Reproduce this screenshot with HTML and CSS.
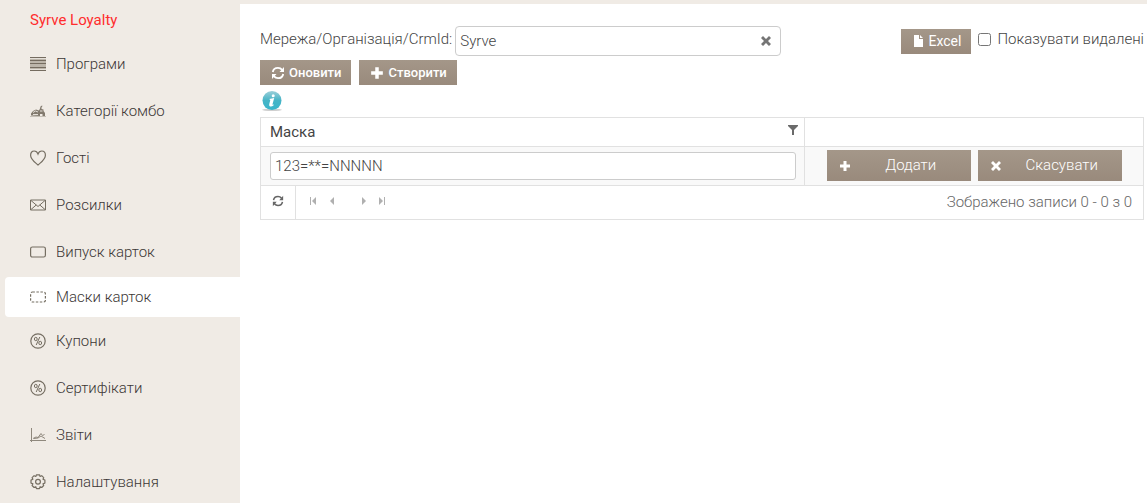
FILE: index.html
```html
<!DOCTYPE html>
<html lang="uk">
<head>
<meta charset="utf-8">
<title>Syrve Loyalty</title>
<link rel="stylesheet" href="styles.css">
</head>
<body>
<svg class="sprite" aria-hidden="true">
  <symbol id="refresh" viewBox="0 0 14 14"><path d="M1.800 6C2.200 3.300 4.200 1.800 7 1.800c1.700 0 3 .6 4.200 2M12.200 8C11.800 10.700 9.800 12.200 7 12.200c-1.700 0-3-.6-4.200-2" fill="none" stroke="currentColor" stroke-width="1.800"/><path d="M13 1v5H8.500zM1 13V8h4.500z" fill="currentColor"/></symbol>
  <symbol id="plus" viewBox="0 0 12 12"><path d="M4.500 1h3v3.500H11v3H7.500V11h-3V7.500H1v-3h3.500z" fill="currentColor"/></symbol>
  <symbol id="cross" viewBox="0 0 12 12"><path d="M3 1 6 4l3-3 2 2-3 3 3 3-2 2-3-3-3 3-2-2 3-3-3-3z" fill="currentColor"/></symbol>
  <symbol id="percent" viewBox="0 0 16 16"><g fill="none" stroke="currentColor"><circle cx="8" cy="8" r="7.200" stroke-width="1.200"/><ellipse cx="5.800" cy="6" rx="1.400" ry="1.700"/><ellipse cx="10.200" cy="10" rx="1.400" ry="1.700"/><path d="m9.800 4-3.600 8"/></g></symbol>
</svg>
<div class="app">
  <aside class="sidebar">
    <h1 class="brand">Syrve Loyalty</h1>
    <nav class="menu">
      <a class="item" href="#"><svg class="icon" viewBox="0 0 16 16"><path fill="#bcb5aa" d="M0 1h16v14H0z"/><path d="M0 1.500h16M0 4.500h16M0 7.500h16M0 11.500h16M0 14.500h16" stroke="#756c60"/><path d="M0 2.500h16M0 13.500h16" stroke="#e4dfd8"/></svg>Програми</a>
      <a class="item" href="#"><svg class="icon" viewBox="0 0 16 16"><path d="M1 12.500v-2L3 8l3-1.500 3 1 1-2 .5-2L12 2.500l.5.500-1 1.500v1.500l2 .5v1.500l1.500 2v3h-2.500v-2H10v2z" fill="#827a6e"/><path d="m3 9.500 2.500-1.500L8 9M10 8h2.500M3 11.500h5" stroke="#e4dfd8" fill="none"/><path d="M0 13.500h16" stroke="#c4beb5"/></svg>Категорії комбо</a>
      <a class="item" href="#"><svg class="icon" viewBox="0 0 16 16"><path d="M8 15C5 12.200.6 9.500.6 5.200.6 2.500 2.200 1 4.200 1 6 1 7.300 2 8 4c.7-2 2-3 3.800-3 2 0 3.600 1.500 3.600 4.200C15.400 9.500 11 12.200 8 15z" fill="none" stroke="currentColor" stroke-width="1.200"/></svg>Гості</a>
      <a class="item" href="#"><svg class="icon" viewBox="0 0 16 16"><path d="M.5 3h15v10H.5zM1 3.500l7 6 7-6M1 12.500l5.200-4.500M15 12.500 9.800 8" fill="none" stroke="currentColor"/></svg>Розсилки</a>
      <a class="item" href="#"><svg class="icon" viewBox="0 0 16 16"><rect x=".6" y="3" width="14.800" height="10" rx="1.800" fill="none" stroke="currentColor" stroke-width="1.200"/></svg>Випуск карток</a>
      <a class="item active" href="#" aria-current="page"><svg class="icon" viewBox="0 0 16 16"><rect x=".6" y="3" width="14.800" height="10" rx="1.800" fill="none" stroke="currentColor" stroke-width="1.200" stroke-dasharray="2.500 1.500"/></svg>Маски карток</a>
      <a class="item" href="#"><svg class="icon"><use href="#percent"/></svg>Купони</a>
      <a class="item" href="#"><svg class="icon"><use href="#percent"/></svg>Сертифікати</a>
      <a class="item" href="#"><svg class="icon" viewBox="0 0 16 16"><path d="M1.500 1v14M0 13.500h16" stroke="#8f887d" fill="none"/><path d="m3 11.500 3-1.500 2 .5 3-4 1.500 2 2-1M4 11.500l4-.5 3-2 4 2.500" stroke="#8f887d" fill="none"/></svg>Звіти</a>
      <a class="item" href="#"><svg class="icon" viewBox="0 0 16 16"><path d="m6.500.8 3 0 .6 1.700 1.600-.8 2 2-.7 1.600 1.900.8v3l-1.900.7.700 1.700-2 2-1.600-.8-.6 1.900h-3l-.7-1.900-1.700.8-2-2 .8-1.700-1.900-.7v-3l1.900-.8-.8-1.600 2-2 1.700.8z" fill="none" stroke="currentColor" stroke-width="1.200" stroke-linejoin="round"/><circle cx="8" cy="7.800" r="2.400" fill="none" stroke="currentColor" stroke-width="1.200"/></svg>Налаштування</a>
    </nav>
  </aside>
  <main class="content">
    <div class="filters">
      <label class="filter-label" for="network">Мережа/Організація/CrmId:</label>
      <div class="combo">
        <input class="combo-input" id="network" type="text" value="Syrve">
        <button class="clear" type="button" aria-label="Очистити"><svg class="glyph"><use href="#cross"/></svg></button>
      </div>
      <div class="export">
        <button class="btn excel" type="button"><svg class="glyph" viewBox="0 0 12 12"><path d="M2 0h5v4h4v8H2zM8 0l3 3H8z" fill="currentColor"/></svg>Excel</button>
        <label class="check"><input class="box" type="checkbox">Показувати видалені</label>
      </div>
    </div>
    <div class="actions">
      <button class="btn" type="button"><svg class="glyph wide"><use href="#refresh"/></svg>Оновити</button>
      <button class="btn" type="button"><svg class="glyph wide"><use href="#plus"/></svg>Створити</button>
    </div>
    <svg class="info" viewBox="0 0 20 20" role="img" aria-label="Інформація">
      <defs><linearGradient id="ball" x2="0" y2="1"><stop stop-color="#9ccfd9"/><stop offset=".5" stop-color="#46b4c6"/><stop offset="1" stop-color="#38b5cb"/></linearGradient></defs>
      <ellipse cx="10" cy="18.800" rx="10" ry="1.200" fill="#cfcfcf"/>
      <circle cx="10" cy="9.500" r="9.500" fill="url(#ball)"/>
      <circle cx="11.200" cy="4.800" r="1.500" fill="#fff"/><path d="M7.200 8 12.200 7l-1.700 6.300q-.2 1 1.500 0l-.3.900q-2.300 1.900-4 1-.9-.6-.4-2.200L8.300 9z" fill="#fff"/>
    </svg>
    <section class="grid">
      <table class="table">
        <thead>
          <tr>
            <th class="head" scope="col"><div class="head-row">Маска<button class="filter" type="button" aria-label="Фільтр"><svg class="funnel" viewBox="0 0 10 10"><path d="M0 0h10v1L6 5v5H4V5L0 1z" fill="currentColor"/></svg></button></div></th>
            <td class="head tools"></td>
          </tr>
        </thead>
        <tbody>
          <tr class="edit">
            <td class="cell"><input class="mask" type="text" aria-label="Маска" value="123=**=NNNNN"></td>
            <td class="cell tools">
              <div class="row-actions">
                <button class="row-btn" type="button"><svg class="glyph"><use href="#plus"/></svg><span class="caption">Додати</span></button>
                <button class="row-btn" type="button"><svg class="glyph"><use href="#cross"/></svg><span class="caption">Скасувати</span></button>
              </div>
            </td>
          </tr>
        </tbody>
      </table>
      <div class="pager">
        <button class="reload" type="button" aria-label="Оновити таблицю"><svg class="glyph"><use href="#refresh"/></svg></button>
        <div class="pages">
          <button class="page" type="button" aria-label="Перша"><svg class="arrow" viewBox="0 0 8 8"><path d="M0 0h1v8H0zM6 0v8L2 4z" fill="currentColor"/></svg></button>
          <button class="page" type="button" aria-label="Попередня"><svg class="arrow" viewBox="0 0 8 8"><path d="M6 0v8L2 4z" fill="currentColor"/></svg></button>
          <button class="page next" type="button" aria-label="Наступна"><svg class="arrow" viewBox="0 0 8 8"><path d="M2 0v8l4-4z" fill="currentColor"/></svg></button>
          <button class="page" type="button" aria-label="Остання"><svg class="arrow" viewBox="0 0 8 8"><path d="M1 0v8l4-4zM6 0h1v8H6z" fill="currentColor"/></svg></button>
        </div>
        <span class="records">Зображено записи 0 - 0 з 0</span>
      </div>
    </section>
  </main>
</div>
</body>
</html>
```

FILE: styles.css
```css
* { box-sizing: border-box; }
body { margin: 0; background: #f0ebe5; color: #444; font: 300 15px/20px Roboto, "Liberation Sans", sans-serif; }
button, input { font: inherit; color: inherit; margin: 0; }
button { border: 0; padding: 0; background: none; cursor: pointer; }
svg { display: block; flex: none; }
.sprite { position: absolute; width: 0; height: 0; }

.app { display: flex; min-height: 100vh; }
.sidebar { width: 240px; flex: none; padding: 10px 0 0 5px; }
.brand { margin: 0 0 10px; padding-left: 25px; font-size: 15px; line-height: 20px; font-weight: 400; color: #ff2d2d; }
.menu { display: flex; flex-direction: column; }
.item { display: flex; align-items: center; gap: 10px; height: 47px; padding-left: 25px; color: #3c3735; text-decoration: none; }
.item.active { height: 40px; margin-top: 2px; background: #fff; border-radius: 4px 0 0 4px; }
.icon { width: 16px; height: 16px; color: #756e62; }

.content { flex: 1; min-width: 0; margin-top: 4px; padding: 22px 3px 0 20px; background: #fff; }
.filters { display: flex; align-items: center; gap: 3px; }
.filter-label { padding-bottom: 4px; }
.combo { display: flex; align-items: center; width: 326px; height: 30px; padding: 0 8px 0 4px; border: 1px solid #ccc; border-radius: 4px; }
.combo-input { flex: 1; min-width: 0; padding: 0; border: 0; background: none; outline: 0; }
.clear { color: #757575; }
.glyph { width: 12px; height: 12px; }
.glyph.wide { width: 14px; height: 14px; }
.export { display: flex; align-items: center; gap: 7px; margin-left: auto; }
.check { display: flex; align-items: center; gap: 6px; padding-bottom: 4px; white-space: nowrap; }
.box { width: 13px; height: 13px; }
.btn { display: flex; align-items: center; gap: 4px; height: 25px; padding: 0 10px 0 11px; background: linear-gradient(#a49789, #998a7c); color: #fff; font-size: 13px; font-weight: 500; }
.btn.excel { font-size: 14px; font-weight: 400; }
.actions { display: flex; gap: 8px; margin-top: 4px; }
.info { width: 20px; height: 20px; margin: 6px 0 6px 2px; }

.grid { border: 1px solid #e1e1e1; }
.table { width: 100%; border-collapse: collapse; table-layout: fixed; }
.head { height: 28px; padding: 0 6px 0 9px; border-bottom: 1px solid #e1e1e1; text-align: left; font-weight: 400; line-height: 18px; }
.head-row { display: flex; align-items: center; justify-content: space-between; }
.filter { padding-bottom: 4px; color: #6a6a6a; }
.funnel { width: 10px; height: 10px; }
.tools { width: 339px; border-left: 1px solid #e1e1e1; }
.edit { background: #f9f9f9; }
.cell { height: 39px; padding: 0 8px 0 9px; border-bottom: 1px solid #e1e1e1; }
.mask { display: block; width: 100%; height: 28px; padding: 0 4px; border: 1px solid #ccc; border-radius: 3px; background: #fff; }
.row-actions { display: flex; justify-content: center; gap: 7px; }
.row-btn { display: flex; align-items: center; width: 144px; height: 31px; padding: 0 12px; background: linear-gradient(#a49789, #998a7c); color: #fff; font-weight: 300; }
.caption { flex: 1; padding-left: 12px; padding-bottom: 2px; text-align: center; }

.pager { display: flex; height: 33px; }
.reload { display: flex; justify-content: center; width: 35px; padding-top: 9px; border-right: 1px solid #e1e1e1; color: #666; }
.pages { display: flex; align-items: flex-start; gap: 10px; padding: 11px 0 0 14px; color: #b0b0b0; }
.next { margin-left: 14px; }
.arrow { width: 8px; height: 8px; }
.records { margin-left: auto; padding: 6px 11px 0 0; color: #666; }
```
